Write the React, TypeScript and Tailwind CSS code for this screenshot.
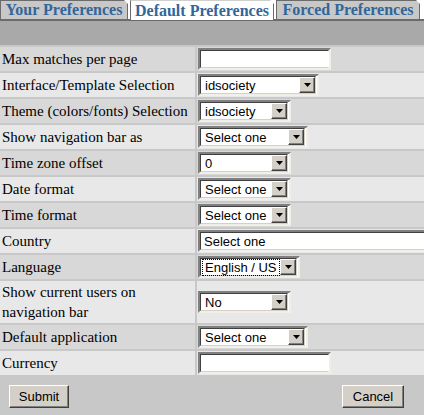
import React from "react";

const serif = { fontFamily: '"Liberation Serif", "Times New Roman", serif' };
const sans = { fontFamily: '"Liberation Sans", Arial, sans-serif' };

function Arrow() {
  return (
    <div className="flex h-[16px] w-[16px] shrink-0 items-center justify-center border border-t-[#ffffff] border-l-[#ffffff] border-r-[#404040] border-b-[#404040] bg-[#d4d0c8] shadow-[inset_-1px_-1px_0_#808080]">
      <svg width="7" height="4" viewBox="0 0 7 4">
        <polygon points="0,0 7,0 3.5,4" fill="#000" />
      </svg>
    </div>
  );
}

function Select({ w, text, focus }: { w: number; text: string; focus?: boolean }) {
  return (
    <div
      className="flex h-[22px] shrink-0 items-center border-2 border-t-[#808080] border-l-[#808080] border-b-[#f0efe8] border-r-[#f0efe8] bg-white pr-[1px]"
      style={{ width: w }}
    >
      <div className="flex h-full flex-1 items-center border border-t-[#404040] border-l-[#404040] border-b-[#d4d0c8] border-r-[#d4d0c8] pl-[2px]">
        <div className="flex flex-1 items-center">
          <span
            className={`whitespace-nowrap text-[13px] leading-[15px] text-black ${focus ? "outline outline-1 outline-dotted outline-black px-[2px]" : "pl-[2px]"}`}
            style={sans}
          >
            {text}
          </span>
        </div>
        <Arrow />
      </div>
    </div>
  );
}

function Input({ w, text }: { w: number; text?: string }) {
  return (
    <div
      className="flex h-[22px] shrink-0 items-center border-2 border-t-[#808080] border-l-[#808080] border-b-[#f0efe8] border-r-[#f0efe8] bg-white"
      style={{ width: w }}
    >
      <div className="flex h-full flex-1 items-center border border-t-[#404040] border-l-[#404040] border-b-[#d4d0c8] border-r-transparent pl-[3px]">
        <span className="whitespace-nowrap text-[13px] leading-[15px] text-black" style={sans}>
          {text}
        </span>
      </div>
    </div>
  );
}

type Row = { label: React.ReactNode; field: React.ReactNode; dark: boolean; tall?: boolean };

const rows: Row[] = [
  { label: "Max matches per page", field: <Input w={133} />, dark: true },
  { label: "Interface/Template Selection", field: <Select w={121} text="idsociety" />, dark: false },
  { label: "Theme (colors/fonts) Selection", field: <Select w={93} text="idsociety" />, dark: true },
  { label: "Show navigation bar as", field: <Select w={110} text="Select one" />, dark: false },
  { label: "Time zone offset", field: <Select w={93} text="0" />, dark: true },
  { label: "Date format", field: <Select w={93} text="Select one" />, dark: false },
  { label: "Time format", field: <Select w={93} text="Select one" />, dark: true },
  { label: "Country", field: <Input w={240} text="Select one" />, dark: false },
  { label: "Language", field: <Select w={102} text="English / US" focus />, dark: true },
  {
    label: (
      <>
        Show current users on
        <br />
        navigation bar
      </>
    ),
    field: <Select w={93} text="No" />,
    dark: false,
    tall: true,
  },
  { label: "Default application", field: <Select w={110} text="Select one" />, dark: true },
  { label: "Currency", field: <Input w={133} />, dark: false },
];

function Tab({ label, active, w }: { label: string; active?: boolean; w: number }) {
  return (
    <div
      className={`relative flex h-[19px] items-center justify-center border border-b-0 border-[#6b6b6b] text-[16px] font-bold leading-none text-[#336699] ${
        active ? "bg-white h-[20px] -mb-[1px] border-t-[#cfcfcf] border-l-[#6b6b6b]" : "bg-[#c8c8c8]"
      }`}
      style={{ ...serif, width: w }}
    >
      <span className="whitespace-nowrap">{label}</span>
      <div className="absolute -right-[1px] -top-[1px] h-[4px] w-[4px] bg-white [clip-path:polygon(0_0,100%_0,100%_100%)]" />
    </div>
  );
}

export default function App() {
  return (
    <div className="h-[415px] w-[424px] overflow-hidden bg-white">
      <div className="flex items-end gap-[2px] border-b-2 border-[#6b6b6b]">
        <Tab label="Your Preferences" w={128} />
        <Tab label="Default Preferences" w={144} active />
        <Tab label="Forced Preferences" w={144} />
      </div>
      <div className="h-[24px] bg-[#a9a9a9]" />
      <div className="flex flex-col gap-[2px] bg-[#c8c8c8] pt-[2px]">
        {rows.map((r, i) => (
          <div key={i} className="grid grid-cols-[195px_minmax(0,1fr)] gap-[2px]">
            <div
              className={`flex items-center pl-[2px] text-[15px] leading-[20px] text-black ${r.dark ? "bg-[#d8d8d8]" : "bg-[#e8e8e8]"} ${r.tall ? "h-[42px]" : "h-[24px]"}`}
              style={serif}
            >
              <span>{r.label}</span>
            </div>
            <div className={`flex items-center overflow-hidden pl-[1px] ${r.dark ? "bg-[#d8d8d8]" : "bg-[#e8e8e8]"}`}>
              {r.field}
            </div>
          </div>
        ))}
      </div>
      <div className="flex h-[45px] items-start justify-between bg-[#c8c8c8] px-[9px] pt-[10px]">
        {["Submit", "Cancel"].map((b) => (
          <div
            key={b}
            className="flex h-[23px] items-center justify-center border border-t-white border-l-white border-r-[#404040] border-b-[#404040] bg-[#d4d0c8] text-[13px] text-black shadow-[inset_-1px_-1px_0_#808080]"
            style={{ ...sans, width: b === "Submit" ? 60 : 62, marginRight: b === "Cancel" ? 11 : 0 }}
          >
            {b}
          </div>
        ))}
      </div>
    </div>
  );
}
